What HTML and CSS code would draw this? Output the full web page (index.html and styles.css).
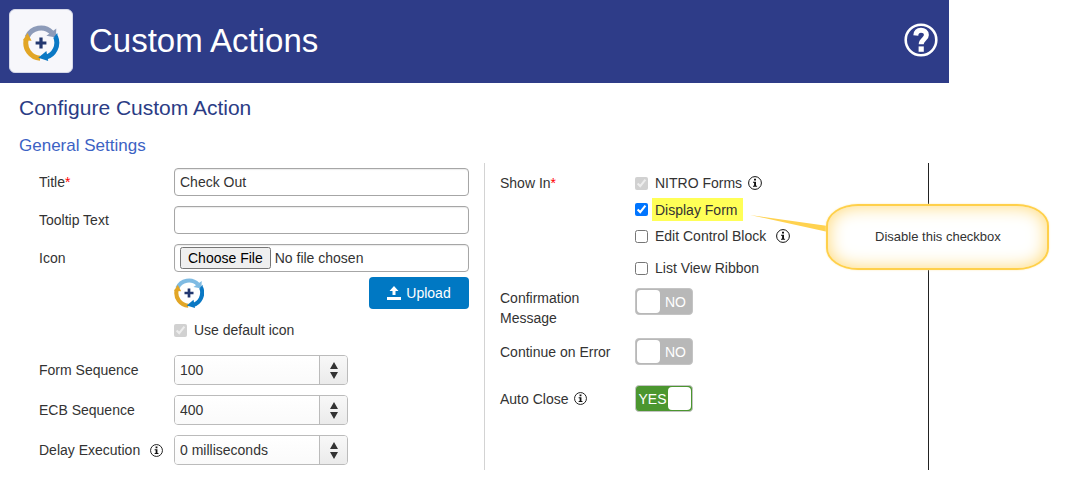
FILE: index.html
```
<!DOCTYPE html>
<html lang="en">
<head>
    <meta charset="UTF-8">
    <meta name="viewport" content="width=device-width, initial-scale=1.0">
    <title>Custom Actions</title>
    <link rel="stylesheet" href="styles.css">
</head>
<body>

<!-- Shared icon shapes -->
<svg class="sprite" aria-hidden="true">
    <symbol id="info" viewBox="0 0 14 14">
        <circle cx="7" cy="7" r="6.4" fill="none" stroke="currentColor" stroke-width="1"/>
        <path d="M6 2.800h2v1.700H6zM5 5.700h3v4h1.100v1.100H5V9.700h1.100V6.800H5z" fill="currentColor"/>
    </symbol>
    <symbol id="cycle" viewBox="0 0 40 40">
        <g fill="none" stroke-width="5.500">
            <path d="M4.500 13.500A16.800 16.800 0 0 1 32 8.500" stroke="currentColor"/>
            <path d="M36.200 13A17 17 0 0 1 25 36" stroke="#0a78c4"/>
            <path d="M19 37A17 17 0 0 1 3.600 16" stroke="#e2a626"/>
        </g>
        <path d="M37 4l-.5 10L26 12z" fill="currentColor"/>
        <path d="M17 36.500l9-7.500 2 11z" fill="#0a78c4"/>
        <path d="M34 14l4-5 1 6z" fill="#0a78c4"/>
        <path d="M5 9l4.500 8.500L0 17z" fill="#e2a626"/>
        <path d="M18.200 14h3.600v4.200H26v3.600h-4.200V26h-3.600v-4.200H14v-3.600h4.200z" fill="#22376f"/>
    </symbol>
    <symbol id="updown" viewBox="0 0 8 17">
        <path d="M4 0l4 7H0zM4 17l4-7H0z" fill="#333"/>
    </symbol>
</svg>

<div class="page">
    <header class="top-bar">
        <span class="app-icon"><svg class="cycle muted"><use href="#cycle"/></svg></span>
        <h1>Custom Actions</h1>
        <a class="help" href="#" aria-label="Help">
            <svg viewBox="0 0 34 34">
                <circle cx="17" cy="17" r="15.300" fill="none" stroke="#fff" stroke-width="2.600"/>
                <path d="M11.800 12.500C12 9 14 7.300 17 7.300s5.400 1.600 5.400 4.700c0 4.300-5.200 4.300-5.200 9.300" fill="none" stroke="#fff" stroke-width="5"/>
                <path d="M14.600 23.400h5.200v5.400h-5.200z" fill="#fff"/>
            </svg>
        </a>
    </header>

    <main>
        <h2>Configure Custom Action</h2>
        <h3>General Settings</h3>

        <form class="settings">
            <div class="column">
                <div class="row">
                    <label class="name" for="title">Title<span class="required">*</span></label>
                    <input class="box" type="text" id="title" value="Check Out">
                </div>
                <div class="row">
                    <label class="name" for="tooltip">Tooltip Text</label>
                    <input class="box" type="text" id="tooltip">
                </div>
                <div class="row">
                    <label class="name" for="icon">Icon</label>
                    <input class="box file" type="file" id="icon">
                </div>
                <div class="row upload-row">
                    <svg class="cycle"><use href="#cycle"/></svg>
                    <button class="upload" type="button">
                        <svg viewBox="0 0 14 14"><path d="M7 0l4.500 5H8.500v4h-3V5H2.500zM0 11h14v3H0z" fill="#fff"/></svg>
                        Upload
                    </button>
                </div>
                <div class="row default-row">
                    <label class="check"><input type="checkbox" checked disabled>Use default icon</label>
                </div>
                <div class="row">
                    <label class="name" for="formSequence">Form Sequence</label>
                    <div class="combo">
                        <input type="text" id="formSequence" value="100">
                        <button type="button" aria-label="Choose form sequence"><svg><use href="#updown"/></svg></button>
                    </div>
                </div>
                <div class="row">
                    <label class="name" for="ecbSequence">ECB Sequence</label>
                    <div class="combo">
                        <input type="text" id="ecbSequence" value="400">
                        <button type="button" aria-label="Choose ECB sequence"><svg><use href="#updown"/></svg></button>
                    </div>
                </div>
                <div class="row">
                    <label class="name" for="delay">Delay Execution <svg class="info small wide"><use href="#info"/></svg></label>
                    <div class="combo">
                        <input type="text" id="delay" value="0 milliseconds">
                        <button type="button" aria-label="Choose delay"><svg><use href="#updown"/></svg></button>
                    </div>
                </div>
            </div>

            <div class="column last">
                <div class="row show-in">
                    <span class="name">Show In<span class="required">*</span></span>
                    <div class="checks">
                        <label class="check"><input type="checkbox" checked disabled>NITRO Forms <svg class="info"><use href="#info"/></svg></label>
                        <div class="marked-line">
                            <label class="check"><input type="checkbox" checked><span class="marked">Display Form</span></label>
                            <!-- Callout note -->
                            <div class="callout">
                                <svg class="tail" viewBox="0 0 78 20"><path d="M0 0l78 11v6z" fill="#ffd24f"/></svg>
                                <div class="note">Disable this checkbox</div>
                            </div>
                        </div>
                        <label class="check"><input type="checkbox">Edit Control Block <svg class="info wide"><use href="#info"/></svg></label>
                        <label class="check ribbon"><input type="checkbox">List View Ribbon</label>
                    </div>
                </div>
                <div class="switches">
                    <div class="row switch-row">
                        <label class="name" for="confirm">Confirmation<br>Message</label>
                        <label class="switch"><input type="checkbox" id="confirm"><span class="knob"></span><span class="state">NO</span></label>
                    </div>
                    <div class="row switch-row">
                        <label class="name" for="continue">Continue on Error</label>
                        <label class="switch"><input type="checkbox" id="continue"><span class="knob"></span><span class="state">NO</span></label>
                    </div>
                    <div class="row switch-row">
                        <label class="name" for="autoClose">Auto Close <svg class="info small"><use href="#info"/></svg></label>
                        <label class="switch on"><input type="checkbox" id="autoClose" checked><span class="state">YES</span><span class="knob"></span></label>
                    </div>
                </div>
            </div>
        </form>
    </main>
</div>

</body>
</html>
```
FILE: styles.css
```
* {
    box-sizing: border-box;
}

body {
    margin: 0;
    background-color: #fff;
    color: #333;
    font-family: "Liberation Sans", Arial, sans-serif;
    font-size: 14px;
    line-height: 20px;
}

input,
button {
    font: inherit;
    color: inherit;
    margin: 0;
}

svg {
    flex: none;
}

.sprite {
    display: none;
}

.page {
    margin-right: 119px; /* Room for the callout */
}

.top-bar {
    display: flex;
    align-items: center;
    gap: 16px;
    padding: 9px 11px 10px 9px;
    background-color: #2e3c88;
    color: #fff;
}

.app-icon {
    display: flex;
    align-items: center;
    justify-content: center;
    width: 64px;
    height: 64px;
    padding-top: 4px;
    border: 1px solid #d5d8e8;
    border-radius: 6px;
    background-color: #f7f7fb;
}

.cycle {
    width: 30px;
    height: 30px;
    color: #7fbbe3;
}

.cycle.muted {
    width: 38px;
    height: 36px;
    color: #8d9bb9;
}

h1,
h2,
h3 {
    margin: 0;
    font-weight: normal;
}

h1 {
    flex: 1;
    font-size: 33px;
    line-height: 40px;
}

.help {
    display: flex;
}

.help svg {
    width: 34px;
    height: 34px;
    margin-bottom: 2px;
}

main {
    padding: 12px 20px 0 19px;
}

h2 {
    color: #2b3c85;
    font-size: 21px;
    line-height: 26px;
}

h3 {
    padding: 15px 0 7px;
    color: #3c62c4;
    font-size: 17px;
    line-height: 20px;
}

.settings {
    display: grid;
    grid-template-columns: 466fr 444fr;
}

.column {
    display: flex;
    flex-direction: column;
    gap: 10px;
    padding: 5px 15px 5px 20px;
    border-right: 1px solid #d3d3d3;
}

.column.last {
    padding-left: 15px;
    border-right-color: #222;
}

.row {
    display: flex;
    align-items: center;
}

.name {
    display: flex;
    align-items: center;
    flex: none;
    width: 135px;
}

.required {
    color: #f00;
}

.box {
    flex: 1;
    min-width: 0;
    height: 28px;
    padding: 0 5px;
    border: 1px solid #a6a6a6;
    border-radius: 4px;
    background-color: #fff;
    box-shadow: inset 0 1px 1px rgba(0, 0, 0, 0.08);
}

.box.file {
    padding: 2px 5px;
}

.upload-row {
    justify-content: space-between;
    margin: -5px 0 -4px;
    padding-left: 135px;
}

.upload {
    display: flex;
    align-items: center;
    justify-content: center;
    gap: 5px;
    width: 100px;
    height: 32px;
    padding: 0;
    border: none;
    border-radius: 4px;
    background-color: #0078c3;
    color: #fff;
}

.upload svg {
    width: 14px;
    height: 14px;
}

.default-row {
    height: 30px;
    padding-left: 135px;
}

.check {
    display: flex;
    align-items: center;
}

.check input {
    width: 13px;
    height: 13px;
    margin-right: 7px;
}

.combo {
    display: flex;
    width: 174px;
    height: 30px;
    border: 1px solid #bbb;
    border-radius: 4px;
    overflow: hidden;
}

.combo input {
    flex: 1;
    min-width: 0;
    padding: 0 5px;
    border: none;
    background: linear-gradient(#fff, #fafafa);
}

.combo button {
    display: flex;
    align-items: center;
    justify-content: center;
    width: 28px;
    padding: 0;
    border: none;
    border-left: 1px solid #bbb;
    background: linear-gradient(#f8f8f8, #ebebeb);
}

.combo svg {
    width: 8px;
    height: 17px;
}

.info {
    width: 14px;
    height: 14px;
    margin-left: 6px;
    color: #111;
}

.info.small {
    width: 13px;
    height: 13px;
}

.info.wide {
    margin-left: 10px;
}

.show-in {
    align-items: flex-start;
    padding-top: 5px;
}

.checks {
    display: flex;
    flex-direction: column;
    align-items: flex-start;
    gap: 7px;
}

.marked-line {
    position: relative; /* The callout hangs off this line */
}

.marked {
    margin: -2px -6px -2px -3px;
    padding: 2px 6px 1px 3px;
    background-color: #ffff57;
}

.ribbon {
    margin-top: 5px;
}

.callout {
    position: absolute;
    top: 4px;
    left: 100%;
    display: flex;
    align-items: flex-start;
    padding-left: 13px;
}

.tail {
    width: 78px;
    height: 20px;
    margin: 11px -2px 0 0;
}

.note {
    width: 223px;
    padding: 21px 0;
    border: 2px solid #ffd04a;
    border-radius: 32px / 22px;
    background-color: #fff;
    box-shadow: inset 0 0 18px #ffd873, 0 0 2px #ffe9ae;
    font-size: 13px;
    line-height: 20px;
    text-align: center;
    white-space: nowrap;
}

.switches {
    display: flex;
    flex-direction: column;
    gap: 10px;
}

.switch-row {
    align-items: flex-start;
}

.switch-row .name {
    min-height: 27px;
}

.switch-row + .switch-row {
    min-height: 37px;
}

.switch {
    display: flex;
    align-items: center;
    width: 58px;
    height: 27px;
    padding: 1px;
    border: 1px solid #c4c4c4;
    border-radius: 4px;
    background-color: #b8b8b8;
    color: #fff;
}

.switch.on {
    background-color: #4b962f;
}

.switch input {
    position: absolute;
    opacity: 0;
}

.knob {
    flex: none;
    width: 23px;
    height: 23px;
    border-radius: 4px;
    background-color: #fff;
}

.state {
    flex: 1;
    text-align: center;
}
```
